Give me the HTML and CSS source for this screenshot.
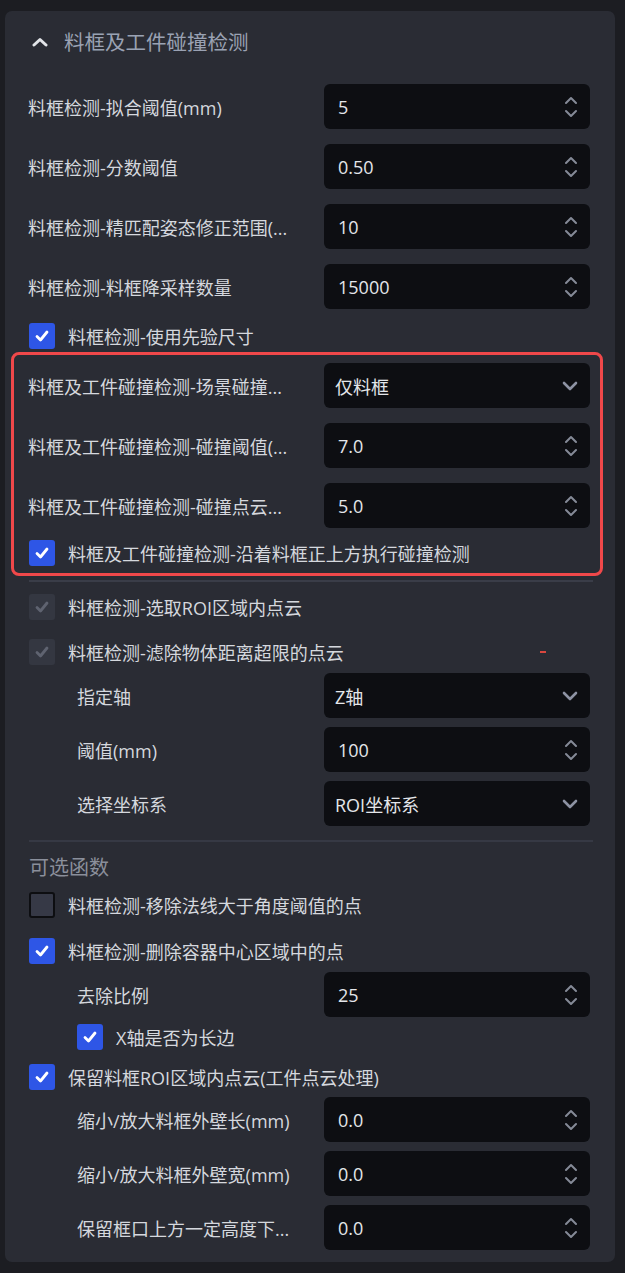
FILE: index.html
```html
<!DOCTYPE html>
<html lang="zh">
<head>
<meta charset="utf-8">
<title>料框及工件碰撞检测</title>
<link rel="stylesheet" href="styles.css">
</head>
<body>
<div class="panel">
  <div class="header">
    <svg class="collapse" width="16" height="10" viewBox="0 0 16 10"><polyline points="2,8 8,2.5 14,8" fill="none" stroke="#e2e4e8" stroke-width="3" stroke-linecap="round" stroke-linejoin="round"/></svg>
    <span class="title">料框及工件碰撞检测</span>
  </div>

  <div class="rows first">
    <div class="row"><span class="label">料框检测-拟合阈值(mm)</span><div class="field spin"><span>5</span><svg class="spinner" width="12" height="24" viewBox="0 0 12 24"><polyline points="1,8 6,3 11,8" /><polyline points="1,16 6,21 11,16" /></svg></div></div>
    <div class="row"><span class="label">料框检测-分数阈值</span><div class="field spin"><span>0.50</span><svg class="spinner" width="12" height="24" viewBox="0 0 12 24"><polyline points="1,8 6,3 11,8" /><polyline points="1,16 6,21 11,16" /></svg></div></div>
    <div class="row"><span class="label">料框检测-精匹配姿态修正范围(...</span><div class="field spin"><span>10</span><svg class="spinner" width="12" height="24" viewBox="0 0 12 24"><polyline points="1,8 6,3 11,8" /><polyline points="1,16 6,21 11,16" /></svg></div></div>
    <div class="row"><span class="label">料框检测-料框降采样数量</span><div class="field spin"><span>15000</span><svg class="spinner" width="12" height="24" viewBox="0 0 12 24"><polyline points="1,8 6,3 11,8" /><polyline points="1,16 6,21 11,16" /></svg></div></div>
  </div>

  <div class="check after-rows"><span class="box on"><svg width="14" height="12" viewBox="0 0 14 12"><polyline points="2,6.5 5.5,10 12,2" /></svg></span><span class="check-label">料框检测-使用先验尺寸</span></div>

  <div class="highlight">
    <div class="rows">
      <div class="row"><span class="label">料框及工件碰撞检测-场景碰撞...</span><div class="field select"><span>仅料框</span><svg class="caret" width="16" height="10" viewBox="0 0 16 10"><polyline points="2,2 8,8 14,2" /></svg></div></div>
      <div class="row"><span class="label">料框及工件碰撞检测-碰撞阈值(...</span><div class="field spin"><span>7.0</span><svg class="spinner" width="12" height="24" viewBox="0 0 12 24"><polyline points="1,8 6,3 11,8" /><polyline points="1,16 6,21 11,16" /></svg></div></div>
      <div class="row"><span class="label">料框及工件碰撞检测-碰撞点云...</span><div class="field spin"><span>5.0</span><svg class="spinner" width="12" height="24" viewBox="0 0 12 24"><polyline points="1,8 6,3 11,8" /><polyline points="1,16 6,21 11,16" /></svg></div></div>
    </div>
    <div class="check in-highlight"><span class="box on"><svg width="14" height="12" viewBox="0 0 14 12"><polyline points="2,6.5 5.5,10 12,2" /></svg></span><span class="check-label">料框及工件碰撞检测-沿着料框正上方执行碰撞检测</span></div>
  </div>

  <div class="divider top-divider"></div>

  <div class="check after-divider"><span class="box disabled"><svg width="14" height="12" viewBox="0 0 14 12"><polyline points="2,6.5 5.5,10 12,2" /></svg></span><span class="check-label">料框检测-选取ROI区域内点云</span></div>
  <div class="check spaced marked"><span class="box disabled"><svg width="14" height="12" viewBox="0 0 14 12"><polyline points="2,6.5 5.5,10 12,2" /></svg></span><span class="check-label">料框检测-滤除物体距离超限的点云</span><span class="mark"></span></div>

  <div class="rows sub tight">
    <div class="row"><span class="label">指定轴</span><div class="field select"><span>Z轴</span><svg class="caret" width="16" height="10" viewBox="0 0 16 10"><polyline points="2,2 8,8 14,2" /></svg></div></div>
    <div class="row"><span class="label">阈值(mm)</span><div class="field spin"><span>100</span><svg class="spinner" width="12" height="24" viewBox="0 0 12 24"><polyline points="1,8 6,3 11,8" /><polyline points="1,16 6,21 11,16" /></svg></div></div>
    <div class="row"><span class="label">选择坐标系</span><div class="field select"><span>ROI坐标系</span><svg class="caret" width="16" height="10" viewBox="0 0 16 10"><polyline points="2,2 8,8 14,2" /></svg></div></div>
  </div>

  <div class="divider mid-divider"></div>

  <div class="section-title">可选函数</div>

  <div class="check after-title"><span class="box off"></span><span class="check-label">料框检测-移除法线大于角度阈值的点</span></div>
  <div class="check spaced-lg"><span class="box on"><svg width="14" height="12" viewBox="0 0 14 12"><polyline points="2,6.5 5.5,10 12,2" /></svg></span><span class="check-label">料框检测-删除容器中心区域中的点</span></div>

  <div class="rows sub tight">
    <div class="row"><span class="label">去除比例</span><div class="field spin"><span>25</span><svg class="spinner" width="12" height="24" viewBox="0 0 12 24"><polyline points="1,8 6,3 11,8" /><polyline points="1,16 6,21 11,16" /></svg></div></div>
  </div>
  <div class="check sub-check"><span class="box on"><svg width="14" height="12" viewBox="0 0 14 12"><polyline points="2,6.5 5.5,10 12,2" /></svg></span><span class="check-label">X轴是否为长边</span></div>

  <div class="check spaced-md"><span class="box on"><svg width="14" height="12" viewBox="0 0 14 12"><polyline points="2,6.5 5.5,10 12,2" /></svg></span><span class="check-label">保留料框ROI区域内点云(工件点云处理)</span></div>

  <div class="rows sub last">
    <div class="row"><span class="label">缩小/放大料框外壁长(mm)</span><div class="field spin"><span>0.0</span><svg class="spinner" width="12" height="24" viewBox="0 0 12 24"><polyline points="1,8 6,3 11,8" /><polyline points="1,16 6,21 11,16" /></svg></div></div>
    <div class="row"><span class="label">缩小/放大料框外壁宽(mm)</span><div class="field spin"><span>0.0</span><svg class="spinner" width="12" height="24" viewBox="0 0 12 24"><polyline points="1,8 6,3 11,8" /><polyline points="1,16 6,21 11,16" /></svg></div></div>
    <div class="row"><span class="label">保留框口上方一定高度下...</span><div class="field spin"><span>0.0</span><svg class="spinner" width="12" height="24" viewBox="0 0 12 24"><polyline points="1,8 6,3 11,8" /><polyline points="1,16 6,21 11,16" /></svg></div></div>
  </div>
</div>
</body>
</html>
```

FILE: styles.css
```css
* { box-sizing: border-box; }

html, body {
  margin: 0;
  background: #1c1d22;
}

body {
  font-family: "Open Sans", "Noto Sans CJK SC", sans-serif;
  color: #d5d8de;
  width: 625px;
  height: 1273px;
  overflow: hidden;
}

.panel {
  margin: 11px 0 0 5px;
  width: 610px;
  background: #2a2c34;
  border-radius: 7px;
  padding: 0 25px 12px 23px;
}

.header {
  height: 62px;
  display: flex;
  align-items: center;
  gap: 16px;
  margin-left: 4px;
}

.collapse { display: block; }

.title {
  font-size: 20.5px;
  color: #9aa2b3;
  line-height: 1;
}

.rows {
  display: flex;
  flex-direction: column;
  gap: 15px;
}

.rows.first { margin-top: 11px; }

.rows.tight { gap: 9px; margin-top: 8px; }
.rows.last { margin-top: 7px; gap: 9px; }

.row {
  display: grid;
  grid-template-columns: 1fr 266px;
  align-items: center;
  height: 45px;
}

.rows.sub .row { padding-left: 49px; }

.label {
  font-size: 18px;
  white-space: nowrap;
  overflow: hidden;
  color: #d5d8de;
}

.field {
  height: 45px;
  background: #0d0e12;
  border-radius: 6px;
  display: flex;
  align-items: center;
  justify-content: space-between;
  font-size: 18px;
  color: #e4e6ea;
}

.field.spin { padding: 0 13px 0 14px; }
.field.select { padding: 0 12px 0 11px; }

.spinner { display: block; }
.spinner polyline {
  fill: none;
  stroke: #858a97;
  stroke-width: 2;
  stroke-linecap: round;
  stroke-linejoin: round;
}

.caret { display: block; }
.caret polyline {
  fill: none;
  stroke: #8d92a3;
  stroke-width: 2.6;
  stroke-linecap: round;
  stroke-linejoin: round;
}

.check {
  display: flex;
  align-items: center;
  gap: 13px;
  height: 26px;
  padding-left: 1px;
}

.check.after-rows { margin-top: 14px; }
.check.in-highlight { margin-top: 12px; }
.check.after-divider { margin-top: 12px; }
.check.spaced { margin-top: 19px; }
.check.after-title { margin-top: 13px; }
.check.spaced-lg { margin-top: 20px; }
.check.sub-check { margin-top: 7px; padding-left: 49px; gap: 13px; }
.check.spaced-md { margin-top: 14px; }

.check.marked { position: relative; }

.mark {
  position: absolute;
  left: 512px;
  top: 12px;
  width: 6px;
  height: 2px;
  background: #d9473f;
}

.check-label {
  font-size: 18px;
  white-space: nowrap;
  color: #d5d8de;
}

.box {
  width: 26px;
  height: 26px;
  border-radius: 3px;
  display: flex;
  align-items: center;
  justify-content: center;
  flex: none;
}

.box svg polyline {
  fill: none;
  stroke-width: 2.8;
  stroke-linecap: round;
  stroke-linejoin: round;
}

.box.on { background: #2e56e6; }
.box.on svg polyline { stroke: #ffffff; }

.box.disabled { background: #343741; }
.box.disabled svg polyline { stroke: #5f6370; }

.box.off {
  background: #363946;
  border: 2px solid #0d0e11;
}

.highlight {
  margin: 3px -13px 0 -17px;
  border: 3px solid #f0484a;
  border-radius: 8px;
  padding: 8px 10px 7px 14px;
}

.divider {
  height: 2px;
  background: #3a3d48;
  margin-left: 1px;
  margin-right: -3px;
}

.top-divider { margin-top: 4px; }
.mid-divider { margin-top: 14px; background: #363944; }

.section-title {
  margin-top: 11px;
  height: 26px;
  display: flex;
  align-items: center;
  font-size: 20px;
  color: #8a8f9b;
  padding-left: 1px;
}
```
